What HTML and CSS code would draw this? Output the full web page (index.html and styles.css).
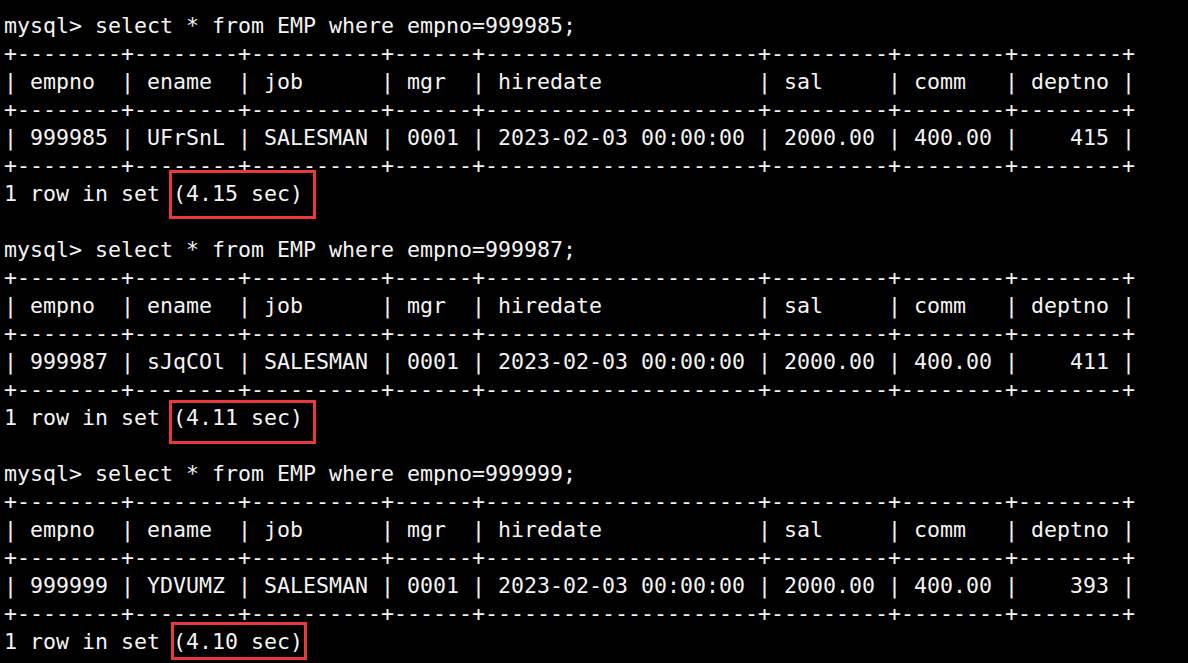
FILE: index.html
```html
<!DOCTYPE html>
<html lang="en">
<head>
<meta charset="utf-8">
<title>mysql</title>
<link rel="stylesheet" href="styles.css">
</head>
<body>
<pre class="term">mysql&gt; select * from EMP where empno=999985;
+--------+--------+----------+------+---------------------+---------+--------+--------+
| empno  | ename  | job      | mgr  | hiredate            | sal     | comm   | deptno |
+--------+--------+----------+------+---------------------+---------+--------+--------+
| 999985 | UFrSnL | SALESMAN | 0001 | 2023-02-03 00:00:00 | 2000.00 | 400.00 |    415 |
+--------+--------+----------+------+---------------------+---------+--------+--------+
1 row in set <span class="mark mark-1">(4.15 sec)</span>

mysql&gt; select * from EMP where empno=999987;
+--------+--------+----------+------+---------------------+---------+--------+--------+
| empno  | ename  | job      | mgr  | hiredate            | sal     | comm   | deptno |
+--------+--------+----------+------+---------------------+---------+--------+--------+
| 999987 | sJqCOl | SALESMAN | 0001 | 2023-02-03 00:00:00 | 2000.00 | 400.00 |    411 |
+--------+--------+----------+------+---------------------+---------+--------+--------+
1 row in set <span class="mark mark-2">(4.11 sec)</span>

mysql&gt; select * from EMP where empno=999999;
+--------+--------+----------+------+---------------------+---------+--------+--------+
| empno  | ename  | job      | mgr  | hiredate            | sal     | comm   | deptno |
+--------+--------+----------+------+---------------------+---------+--------+--------+
| 999999 | YDVUMZ | SALESMAN | 0001 | 2023-02-03 00:00:00 | 2000.00 | 400.00 |    393 |
+--------+--------+----------+------+---------------------+---------+--------+--------+
1 row in set <span class="mark mark-3">(4.10 sec)</span></pre>
</body>
</html>
```
FILE: styles.css
```css
html, body {
  margin: 0;
  padding: 0;
  background: #000;
  height: 100%;
  overflow: hidden;
}

.term {
  margin: 0;
  padding: 12px 0 0 4px;
  font-family: "DejaVu Sans Mono", "Liberation Mono", monospace;
  font-size: 21.6px;
  line-height: 28px;
  color: #f4f4f4;
  white-space: pre;
}

.mark {
  display: inline-block;
  position: relative;
  line-height: 28px;
}

.mark::after {
  content: "";
  position: absolute;
  border: 3px solid #e8393c;
}

.mark-1::after {
  left: -4px;
  right: -13px;
  top: -10px;
  bottom: -11px;
}

.mark-2::after {
  left: -4px;
  right: -13px;
  top: -4px;
  bottom: -12px;
}

.mark-3::after {
  left: -2px;
  right: -4px;
  top: -6px;
  bottom: -4px;
}
```
